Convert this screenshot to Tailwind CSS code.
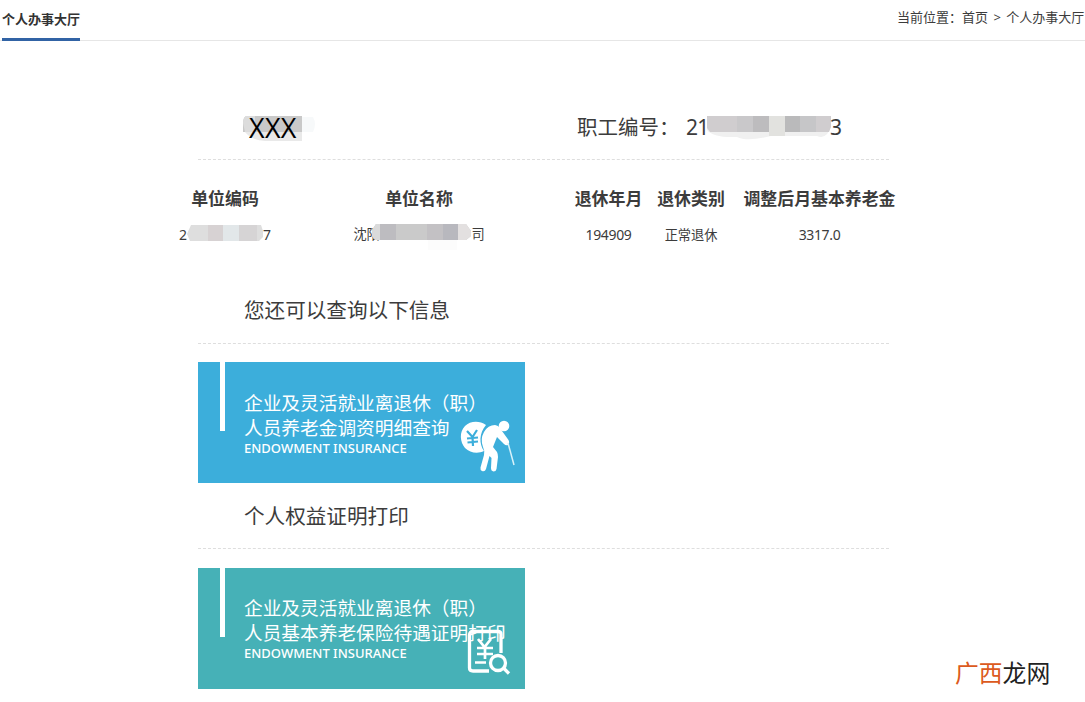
<!DOCTYPE html>
<html lang="zh-CN">
<head>
<meta charset="utf-8">
<title>个人办事大厅</title>
<script src="https://cdn.jsdelivr.net/npm/@tailwindcss/browser@4"></script>
</head>
<body class="relative h-[702px] w-[1085px] overflow-hidden bg-white font-['Noto_Sans','Noto_Sans_CJK_SC',sans-serif] text-[#3c3c3c]">
<header class="flex h-[41px] justify-between whitespace-nowrap border-b border-[#e6e6e6] pl-[2px]">
  <h1 class="h-[41px] w-[78px] border-b-3 border-[#3163a5] text-[13px] leading-[39px] font-bold text-[#333]">个人办事大厅</h1>
  <nav class="w-[188px] text-[13px] leading-[34px]">当前位置：首页 <span class="mx-[2px]">&gt;</span> 个人办事大厅</nav>
</header>
<main class="ml-[198px] w-[691px] whitespace-nowrap">
  <section class="flex h-[119px] border-b border-dashed border-[#dedede] pt-[71px]">
    <div class="ml-[45px] h-[30px] w-[334px]">
      <div class="relative h-[30px] w-[74px]">
        <svg class="absolute left-0 top-[4px]" width="74" height="26"><path d="M3 0H59V16H0V7Q0 2 3 0Z" fill="#c9c9c9"/><path d="M0 7Q0 2 3 0H12V16H2Z" fill="#dcdcdc"/><path d="M2 16H59V25H22Q8 24 2 16Z" fill="#e9e9e9"/><path d="M59 1H70Q74 8 70 16H59Z" fill="#f7f9fa"/></svg>
        <span class="absolute left-[6px] top-0 text-[27px] leading-[32px] text-black tracking-[0.3px] font-['Open_Sans',sans-serif]">XXX</span>
      </div>
    </div>
    <div class="flex text-[20.5px] leading-[30px]">
      <span class="w-[109px]">职工编号：</span><span class="w-[21px] text-[21px] tracking-[-0.8px]">21</span>
      <svg class="mt-[4px]" width="124" height="26"><path d="M0 0H124V10Q120 24 110 20H64Q40 26 30 21Q6 22 0 14Z" fill="#f0f0f0"/><path d="M0 0H124V11L122 16H3L0 12Z" fill="#d0cdcf"/><path d="M30 0h16v16H30z" fill="#c9c8ca"/><path d="M46 0h16v16H46z" fill="#bdbcbe"/><path d="M62 0h16v20H62z" fill="#e2e2df"/><path d="M78 0h15v16H78z" fill="#bababb"/><path d="M93 0h16v16H93z" fill="#c6c6c8"/></svg>
      <span class="-ml-px text-[21px]">3</span>
    </div>
  </section>
  <table class="-ml-[20px] mt-[25px] w-[730px] table-fixed text-center">
    <colgroup><col class="w-[94px]"><col class="w-[294px]"><col class="w-[85px]"><col class="w-[80px]"><col class="w-[177px]"></colgroup>
    <thead class="text-[16.9px] leading-[28px]"><tr class="h-[28px]"><th>单位编码</th><th>单位名称</th><th>退休年月</th><th>退休类别</th><th>调整后月基本养老金</th></tr></thead>
    <tbody class="text-[13.2px] leading-[28px]"><tr class="h-[44px]">
      <td><div class="flex justify-center text-[14px]"><span>2</span><svg class="mt-[4px]" width="76" height="18"><path d="M4 0H74L76 6V12L72 16H3L0 9Z" fill="#dedede"/><path d="M21 0h15v16H21z" fill="#d7d2d3"/><path d="M36 0h16v16H36z" fill="#e2e7e9"/><path d="M52 0h18v16H52z" fill="#d6d4d5"/></svg><span>7</span></div></td>
      <td><div class="flex justify-center"><span>沈阳</span><svg class="relative -ml-[7.4px] mt-[3px]" width="99" height="27"><path d="M4 1H94L99 8V13L94 17H3L0 13V7Z" fill="#cacaca"/><path d="M0 7L4 1H8V17H3L0 13Z" fill="#dadada"/><path d="M8 1h16v16H8z" fill="#bdbcc0"/><path d="M55 1h16v16H55z" fill="#c3c1c4"/><path d="M71 1h15v16H71z" fill="#b8b8be"/><path d="M86 1H94L99 8V13L94 17H86Z" fill="#e3e0e0"/><path d="M56 17h29v10H56z" fill="#fcfcfc"/></svg><span>司</span></div></td>
      <td class="text-[14px] tracking-[-0.35px]">194909</td><td>正常退休</td><td class="text-[14px] tracking-[-0.35px]">3317.0</td>
    </tr></tbody>
  </table>
  <h2 class="mt-[38px] h-[49px] border-b border-dashed border-[#dedede] pl-[46px] text-[20.6px] leading-[30px]">您还可以查询以下信息</h2>
  <article class="relative mt-[18px] flex h-[121px] w-[327px] bg-[#3caedb] text-white">
    <div class="ml-[22px] h-[69px] w-[5px] bg-white"></div>
    <div class="ml-[19px] pt-[28px]">
      <p class="text-[18.7px] leading-[25px]">企业及灵活就业离退休（职）<br>人员养老金调资明细查询</p>
      <p class="text-[13px] leading-[16px] font-medium">ENDOWMENT INSURANCE</p>
    </div>
    <svg class="absolute left-[260px] top-[55px]" width="60" height="58" viewBox="0 0 60 58" fill="none">
      <path d="M28 8C21 3 12 4 7 9C1 15 2 25 7 31C12 36 20 37 26 34C21 27 21 16 28 8Z" fill="#fff"/>
      <path d="M9 14L14.500 20L19 13M9 21.500L20 20.500M9.500 25.500L20 24.500M14.500 20L15 29" stroke="#3caedb" stroke-width="2.200"/>
      <circle cx="46" cy="9" r="5.300" fill="#fff"/>
      <path d="M26 15Q30 8 37 8Q42 9 44 14L50.500 23Q52 26 50 28Q48 29 46 27L39 20L35 30L39 35Q40 37 40 40L38.500 52Q38 54.500 35.500 54.500Q33 54 33 51L33.500 41L31.500 39L28 52Q27 55 24 54Q22 53 22.500 50.500L26 38Q27 34 25 30Q22 22 26 15Z" fill="#fff"/>
      <path d="M50 26L56 48" stroke="#d9f2fa" stroke-width="1.500"/>
    </svg>
  </article>
  <h2 class="mt-[18px] h-[48px] border-b border-dashed border-[#dedede] pl-[46px] text-[20.6px] leading-[30px]">个人权益证明打印</h2>
  <article class="relative mt-[19px] flex h-[121px] w-[327px] bg-[#46b1b7] text-white">
    <div class="ml-[22px] h-[69px] w-[5px] bg-white"></div>
    <div class="ml-[19px] pt-[27px]">
      <p class="text-[18.7px] leading-[25px]">企业及灵活就业离退休（职）<br>人员基本养老保险待遇证明打印</p>
      <p class="text-[13px] leading-[16px] font-medium">ENDOWMENT INSURANCE</p>
    </div>
    <svg class="absolute left-[268px] top-[60px]" width="46" height="50" viewBox="0 0 46 50" fill="none" stroke="#fff" stroke-width="3.300">
      <path d="M35 25V6Q35 3.500 32 3.500H7Q3.500 3.500 3.500 7V40Q3.500 43 7 43H23"/>
      <path d="M12 11L18.500 19L25 11M11 20H27M11 26H27M19 19V31M9 34.500H20" stroke-width="2.700"/>
      <circle cx="32" cy="35" r="7.500"/><path d="M37.500 40L43 45.500"/>
    </svg>
  </article>
</main>
<div class="absolute left-[955px] top-[655px] whitespace-nowrap text-[23.8px] leading-[36px] text-[#222]"><span class="text-[#dc5a20]">广西</span>龙网</div>
</body>
</html>
